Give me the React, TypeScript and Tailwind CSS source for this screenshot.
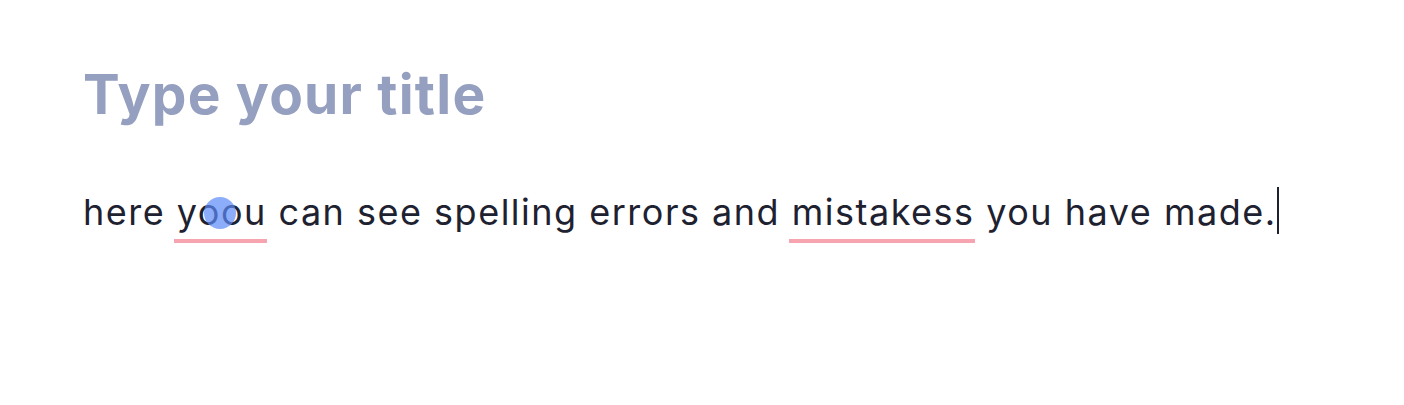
function Misspelled({ children }: { children: React.ReactNode }) {
  return (
    <span className="relative inline-block">
      {children}
      <span className="absolute -left-[3px] right-0 top-[calc(100%+2px)] h-[4px] bg-[#f7a4b1]" />
    </span>
  );
}

export default function App() {
  return (
    <div className="min-h-[405px] w-full bg-white pl-[83px] pt-[58px] font-['Inter',sans-serif]">
      <h1 className="text-[55px] font-bold leading-[72px] tracking-[1.2px] text-[#959fc0]">
        Type your title
      </h1>
      <p className="mt-[48px] text-[36px] leading-[50px] tracking-[1.5px] text-[#1e2130]">
        here{" "}
        <span className="relative">
          <Misspelled>yoou</Misspelled>
          <span className="absolute left-[27px] top-[7px] h-[32px] w-[32px] rounded-full bg-[#5b8af7]/70" />
        </span>{" "}
        can see spelling errors and <Misspelled>mistakess</Misspelled> you have made.
        <span className="inline-block h-[47px] w-[2px] translate-y-[9px] bg-[#1e2130]" />
      </p>
    </div>
  );
}
